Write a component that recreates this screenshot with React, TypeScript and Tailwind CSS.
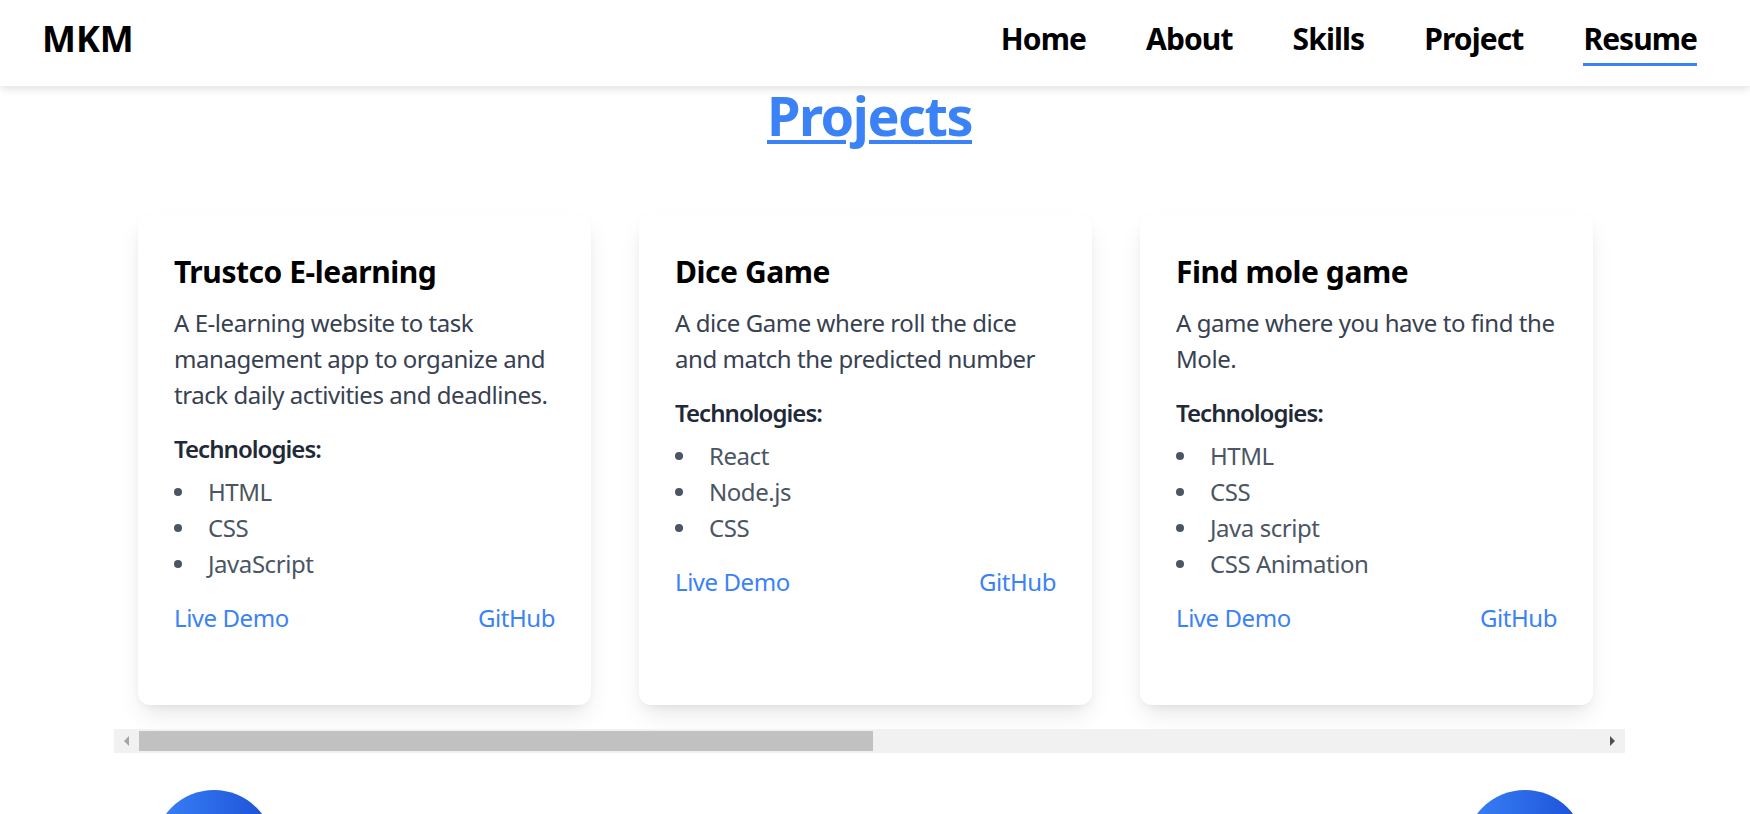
import React from "react";

type Project = {
    title: string;
    lines: string[];
    tech: string[];
};

// descriptions kept as the lines they wrap to in the design
const projects: Project[] = [
    {
        title: "Trustco E-learning",
        lines: [
            "A E-learning website to task",
            "management app to organize and",
            "track daily activities and deadlines.",
        ],
        tech: ["HTML", "CSS", "JavaScript"],
    },
    {
        title: "Dice Game",
        lines: ["A dice Game where roll the dice", "and match the predicted number"],
        tech: ["React", "Node.js", "CSS"],
    },
    {
        title: "Find mole game",
        lines: ["A game where you have to find the", "Mole."],
        tech: ["HTML", "CSS", "Java script", "CSS Animation"],
    },
];

const navLinks = ["Home", "About", "Skills", "Project", "Resume"];

const Header = () => {
    return (
        <header className="relative z-10 h-[86px] bg-white shadow-[0_4px_8px_-1px_rgba(0,0,0,0.12)] flex items-start justify-between pl-[42px] pr-[53px]">
            <div className="mt-[12px] text-[36px] leading-[54px] font-bold text-black">
                MKM
            </div>
            <nav className="mt-[18px] flex gap-[60px]">
                {navLinks.map((link) => (
                    <a
                        key={link}
                        href="#"
                        className={
                            link === "Resume"
                                ? "text-[30px] leading-[42px] font-bold tracking-[-0.032em] text-black pb-[3px] border-b-[3px] border-[#3b82f6]"
                                : "text-[30px] leading-[42px] font-bold tracking-[-0.03em] text-black"
                        }
                    >
                        {link}
                    </a>
                ))}
            </nav>
        </header>
    );
};

const ProjectCard = ({ project }: { project: Project }) => {
    return (
        <div className="w-[453px] shrink-0 min-h-[490px] bg-white rounded-[12px] p-[36px] tracking-[-0.028em] shadow-[0_12px_24px_-4px_rgba(0,0,0,0.1),0_4px_10px_-4px_rgba(0,0,0,0.08)]">
            <h3 className="text-[30px] leading-[42px] font-bold text-black mb-[12px]">
                {project.title}
            </h3>
            <p className="text-[24px] leading-[36px] text-[#374151] mb-[18px] whitespace-nowrap">
                {project.lines.map((line, i) => (
                    <span key={i}>
                        {line}
                        {i < project.lines.length - 1 && <br />}
                    </span>
                ))}
            </p>
            <h4 className="text-[24px] leading-[36px] font-semibold tracking-[-0.04em] text-[#1f2937] mb-[7px]">
                Technologies:
            </h4>
            <ul>
                {project.tech.map((t) => (
                    <li
                        key={t}
                        className="flex items-center text-[24px] leading-[36px] text-[#4b5563]"
                    >
                        <span className="w-[8px] h-[8px] rounded-full bg-[#4b5563] mr-[26px]" />
                        {t}
                    </li>
                ))}
            </ul>
            <div className="mt-[18px] flex justify-between text-[24px] leading-[36px] text-[#3b82f6]">
                <a href="#">Live Demo</a>
                <a href="#">GitHub</a>
            </div>
        </div>
    );
};

export default function App() {
    return (
        <div className="bg-white font-['Noto_Sans',sans-serif] h-[814px] overflow-hidden">
            <Header />
            <main className="w-[1739px]">
                <h2 className="-mt-[1px] text-center text-[54px] leading-[60px] font-bold tracking-[-0.028em] text-[#3b82f6] underline decoration-[4px] underline-offset-[4px]">
                    Projects
                </h2>

                <div className="mx-[114px] mt-[46px] overflow-hidden">
                    <div className="flex gap-[48px] p-[24px]">
                        {projects.map((p) => (
                            <ProjectCard key={p.title} project={p} />
                        ))}
                    </div>
                </div>

                {/* scrollbar */}
                <div className="mx-[114px] h-[24px] bg-[#f1f1f1] flex items-center">
                    <div className="w-[25px] h-full flex items-center justify-center">
                        <div className="w-0 h-0 border-y-[5px] border-y-transparent border-r-[5px] border-r-[#a3a3a3]" />
                    </div>
                    <div className="w-[734px] h-[20px] bg-[#c1c1c1]" />
                    <div className="flex-1" />
                    <div className="w-[25px] h-full flex items-center justify-center">
                        <div className="w-0 h-0 border-y-[5px] border-y-transparent border-l-[5px] border-l-[#505050]" />
                    </div>
                </div>

                <div className="mt-[37px] flex justify-between px-[154px]">
                    <div className="w-[120px] h-[120px] rounded-full bg-linear-to-r from-[#3b82f6] to-[#1d4ed8]" />
                    <div className="w-[120px] h-[120px] rounded-full bg-linear-to-r from-[#3b82f6] to-[#1d4ed8]" />
                </div>
            </main>
        </div>
    );
}
